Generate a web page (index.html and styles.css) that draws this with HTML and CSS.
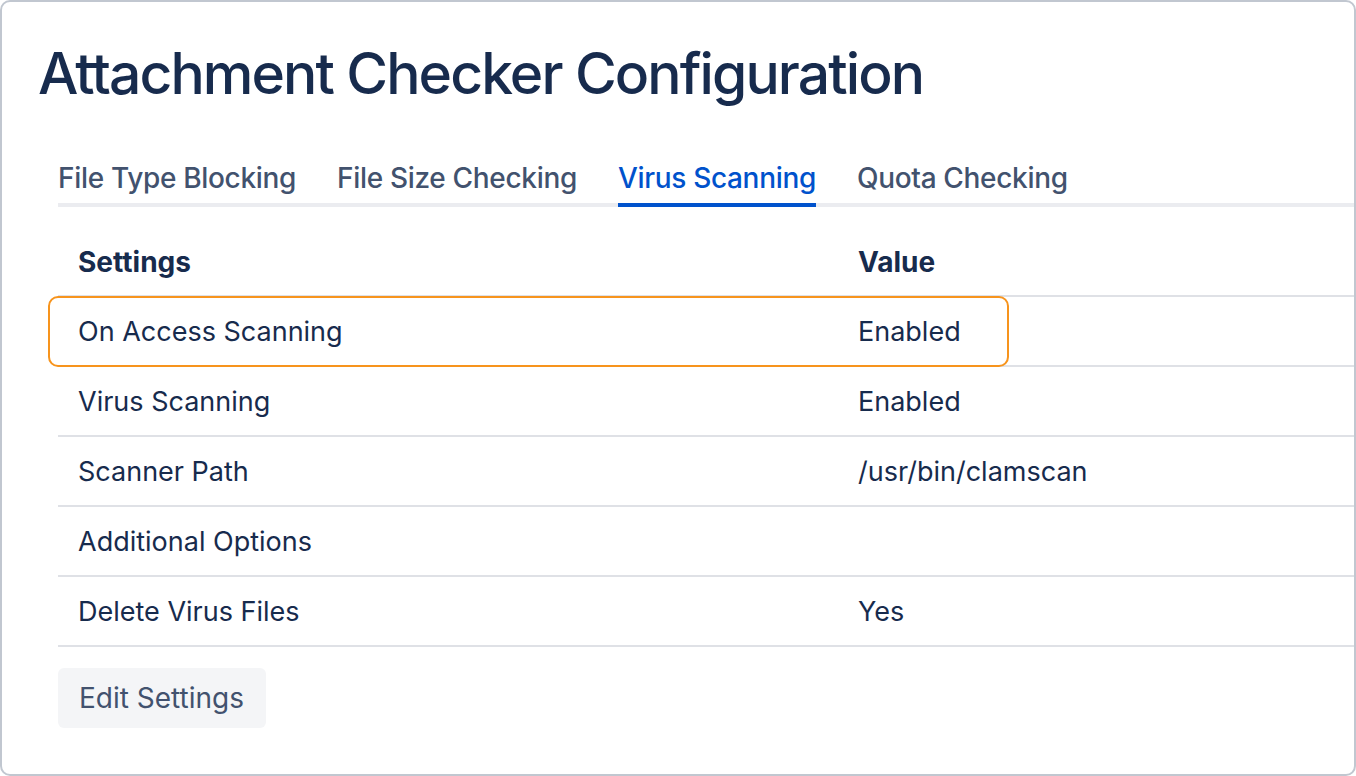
FILE: index.html
```html
<!doctype html>
<html lang="en">

<head>
    <meta charset="UTF-8" />
    <title>Attachment Checker Configuration</title>
    <link rel="stylesheet" href="styles.css">
</head>

<body>
    <div class="frame">
        <h1 class="page-title">Attachment Checker Configuration</h1>

        <div class="main">
            <!-- Tabs -->
            <nav class="tabs">
                <a href="#" class="tab">File Type Blocking</a>
                <a href="#" class="tab">File Size Checking</a>
                <a href="#" class="tab active">Virus Scanning</a>
                <a href="#" class="tab">Quota Checking</a>
            </nav>

            <!-- Settings table -->
            <div class="table-wrap">
                <table class="settings-table">
                    <thead>
                        <tr>
                            <th class="col-setting">Settings</th>
                            <th>Value</th>
                        </tr>
                    </thead>
                    <tbody>
                        <tr>
                            <td>On Access Scanning</td>
                            <td>Enabled</td>
                        </tr>
                        <tr>
                            <td>Virus Scanning</td>
                            <td>Enabled</td>
                        </tr>
                        <tr>
                            <td>Scanner Path</td>
                            <td>/usr/bin/clamscan</td>
                        </tr>
                        <tr>
                            <td>Additional Options</td>
                            <td></td>
                        </tr>
                        <tr>
                            <td>Delete Virus Files</td>
                            <td>Yes</td>
                        </tr>
                    </tbody>
                </table>
                <div class="row-highlight"></div>
            </div>

            <button type="button" class="edit-button">Edit Settings</button>
        </div>
    </div>
</body>

</html>
```

FILE: styles.css
```css
body {
    margin: 0;
    font-family: Inter, 'Noto Sans', sans-serif;
    background: white;
    color: #172b4d;
}

.frame {
    width: 1356px;
    height: 776px;
    box-sizing: border-box;
    border: 2px solid #c1c7d0;
    border-radius: 10px;
    overflow: hidden;
    padding: 37px 0 0 36px;
}

.page-title {
    margin: 0;
    font-size: 57px;
    font-weight: 500;
    letter-spacing: -1.9px;
    line-height: 70px;
    color: #172b4d;
}

.main {
    margin-left: 20px;
}

.tabs {
    display: flex;
    gap: 41px;
    margin-top: 50px;
    border-bottom: 4px solid #ebecf0;
}

.tab {
    display: block;
    font-size: 28px;
    font-weight: 500;
    line-height: 36px;
    letter-spacing: -0.32px;
    padding: 1px 0 7px 0;
    margin-bottom: -4px;
    border-bottom: 4px solid transparent;
    color: #42526e;
    text-decoration: none;
}

.tab.active {
    color: #0052cc;
    border-bottom-color: #0052cc;
}

.table-wrap {
    position: relative;
}

.settings-table {
    width: 100%;
    border-collapse: collapse;
    font-size: 27px;
    line-height: 34px;
}

.settings-table th {
    text-align: left;
    font-size: 28px;
    font-weight: 700;
    padding: 38px 20px 16px 20px;
    border-bottom: 2px solid #dfe1e6;
}

.settings-table td {
    padding: 18px 20px 16px 20px;
    border-bottom: 2px solid #dfe1e6;
}

.col-setting {
    width: 740px;
}

.row-highlight {
    position: absolute;
    left: -10px;
    top: 89px;
    width: 957px;
    height: 67px;
    border: 2px solid #f7941d;
    border-radius: 10px;
}

.edit-button {
    margin-top: 21px;
    height: 60px;
    padding: 0 22px 0 21px;
    border: none;
    border-radius: 6px;
    background: #f4f5f7;
    color: #42526e;
    font-family: inherit;
    font-size: 28px;
}
```
